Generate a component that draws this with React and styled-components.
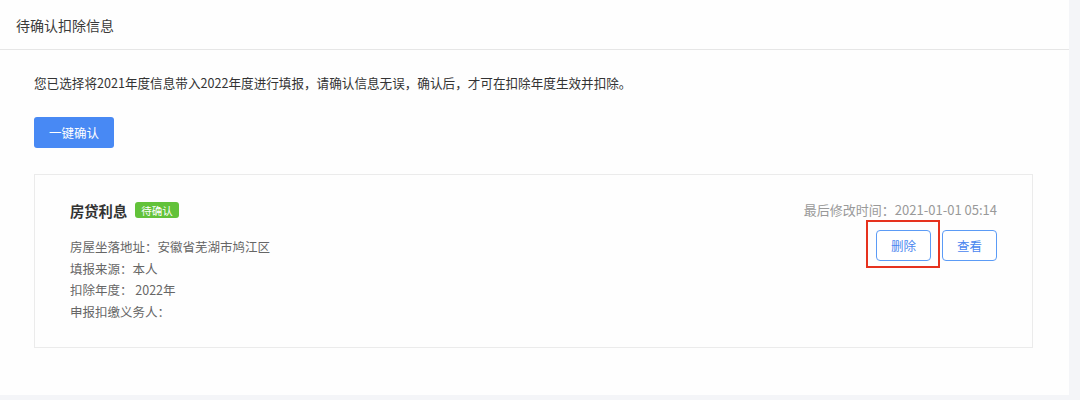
import React from 'react';
import styled, { createGlobalStyle } from 'styled-components';

const records = [
  {
    title: '房贷利息',
    status: '待确认',
    updated: '2021-01-01 05:14',
    lines: [
      '房屋坐落地址：安徽省芜湖市鸠江区',
      '填报来源：本人',
      '扣除年度： 2022年',
      '申报扣缴义务人：',
    ],
  },
];

const App = () => {
  return (
    <>
      <GlobalStyle />
      <Page>
        <Panel>
          <Header>待确认扣除信息</Header>
          <Content>
            <Notice>
              您已选择将2021年度信息带入2022年度进行填报，请确认信息无误，确认后，才可在扣除年度生效并扣除。
            </Notice>
            <PrimaryButton>一键确认</PrimaryButton>
            {records.map((r) => (
              <Card key={r.title}>
                <CardMain>
                  <TitleRow>
                    <CardTitle>{r.title}</CardTitle>
                    <Badge>{r.status}</Badge>
                  </TitleRow>
                  <InfoList>
                    {r.lines.map((line) => (
                      <InfoLine key={line}>{line}</InfoLine>
                    ))}
                  </InfoList>
                </CardMain>
                <CardSide>
                  <Updated>最后修改时间：{r.updated}</Updated>
                  <Actions>
                    <Highlight>
                      <OutlineButton>删除</OutlineButton>
                    </Highlight>
                    <OutlineButton>查看</OutlineButton>
                  </Actions>
                </CardSide>
              </Card>
            ))}
          </Content>
        </Panel>
      </Page>
    </>
  );
};

export default App;

const GlobalStyle = createGlobalStyle`
  body {
    margin: 0;
    padding: 0;
    background: #f4f5f8;
    font-family: "Noto Sans CJK SC", "Liberation Sans", sans-serif;
  }
`;

const Page = styled.div`
  width: 1080px;
  height: 400px;
  background: #f4f5f8;
`;

const Panel = styled.div`
  width: 1069px;
  height: 395px;
  background: #fefefe;
`;

const Header = styled.div`
  height: 49px;
  display: flex;
  align-items: center;
  padding-left: 16px;
  border-bottom: 1px solid #e6e6e6;
  font-size: 14px;
  color: #3a3a3a;
`;

const Content = styled.div`
  padding: 23px 36px 0 34px;
`;

const Notice = styled.p`
  margin: 0;
  font-size: 12.6px;
  line-height: 20px;
  color: #333;
`;

const PrimaryButton = styled.button`
  margin-top: 24px;
  width: 80px;
  height: 31px;
  border: none;
  border-radius: 3px;
  background: #4889f4;
  color: #fff;
  font-family: inherit;
  font-size: 12.5px;
  padding: 0;
`;

const Card = styled.div`
  margin-top: 26px;
  width: 999px;
  box-sizing: border-box;
  border: 1px solid #ebebeb;
  padding: 25px 35px 24px 35px;
  display: flex;
  justify-content: space-between;
`;

const CardMain = styled.div`
  display: flex;
  flex-direction: column;
`;

const TitleRow = styled.div`
  display: flex;
  align-items: center;
  height: 20px;
  gap: 8px;
`;

const CardTitle = styled.span`
  font-size: 14.3px;
  font-weight: 700;
  color: #333;
`;

const Badge = styled.span`
  display: inline-flex;
  align-items: center;
  height: 16px;
  padding: 0 6px;
  border-radius: 3px;
  background: #62c23a;
  color: #fff;
  font-size: 10.5px;
`;

const InfoList = styled.div`
  margin-top: 16px;
`;

const InfoLine = styled.div`
  font-size: 12.5px;
  line-height: 21.7px;
  color: #666;
`;

const CardSide = styled.div`
  display: flex;
  flex-direction: column;
  align-items: flex-end;
`;

const Updated = styled.div`
  height: 20px;
  line-height: 20px;
  font-size: 13px;
  color: #999;
`;

const Actions = styled.div`
  margin-top: 10px;
  display: flex;
  gap: 11px;
`;

const Highlight = styled.div`
  position: relative;

  &::after {
    content: '';
    position: absolute;
    left: -10px;
    right: -9px;
    top: -10px;
    bottom: -7px;
    border: 2px solid #e6321e;
    pointer-events: none;
  }
`;

const OutlineButton = styled.button`
  width: 55px;
  height: 31px;
  padding: 0;
  border: 1px solid #5b9bf6;
  border-radius: 4px;
  background: #fff;
  color: #4a86ef;
  font-family: inherit;
  font-size: 12.5px;
`;
